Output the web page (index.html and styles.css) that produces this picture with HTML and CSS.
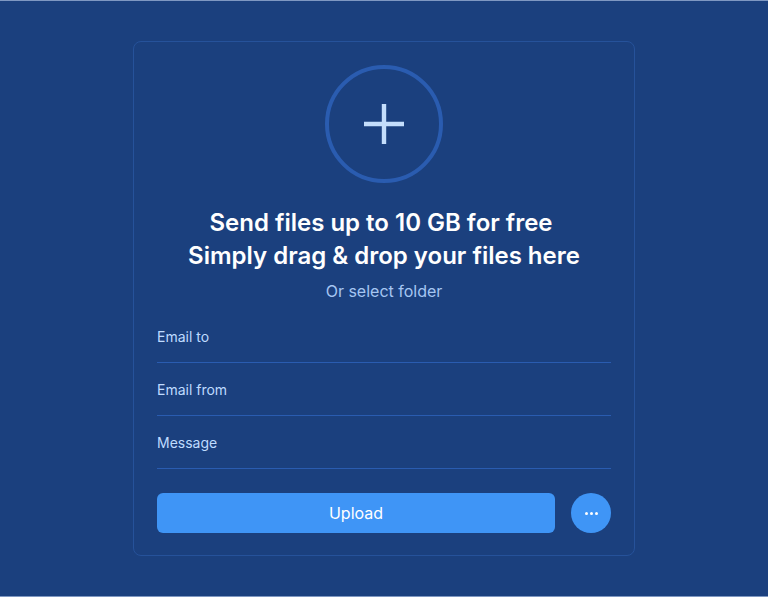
FILE: index.html
```html
<!DOCTYPE html>
<html lang="en">
<head>
<meta charset="utf-8">
<title>Send files</title>
<link rel="stylesheet" href="styles.css">
</head>
<body>
<main class="page">
  <section class="card">
    <div class="drop">
      <svg class="plus" width="40" height="40" viewBox="0 0 40 40" aria-hidden="true">
        <path d="M20 0V40M0 20H40" stroke="#c4defc" stroke-width="4.4" fill="none"/>
      </svg>
    </div>
    <h1 class="title">Send files up to 10 GB for free&nbsp;<br>Simply drag &amp; drop your files here</h1>
    <p class="sub">Or select folder</p>
    <div class="fields">
      <label class="field">Email to</label>
      <label class="field">Email from</label>
      <label class="field">Message</label>
    </div>
    <div class="actions">
      <button class="upload" type="button">Upload</button>
      <button class="more" type="button" aria-label="More options">
        <span class="dot"></span><span class="dot"></span><span class="dot"></span>
      </button>
    </div>
  </section>
</main>
</body>
</html>
```

FILE: styles.css
```css
html, body {
  margin: 0;
  padding: 0;
  height: 100%;
}
body {
  background: #1b407e;
  font-family: Inter, "Noto Sans", "Liberation Sans", sans-serif;
  border-top: 1px solid #7f98c2;
  border-bottom: 1px solid #7f98c2;
  box-sizing: border-box;
}
.page {
  height: 100%;
  display: flex;
  align-items: center;
  justify-content: center;
}
.card {
  width: 502px;
  box-sizing: border-box;
  border: 1px solid #26529a;
  border-radius: 8px;
  padding: 23px 23px 22px;
  display: flex;
  flex-direction: column;
  align-items: center;
}
.drop {
  width: 118px;
  height: 118px;
  box-sizing: border-box;
  border: 4px solid #2a5cb0;
  border-radius: 50%;
  display: flex;
  align-items: center;
  justify-content: center;
}
.title {
  margin: 23px 0 0;
  font-size: 24px;
  line-height: 33px;
  font-weight: 600;
  color: #ffffff;
  text-align: center;
}
.sub {
  margin: 7px 0 0;
  font-size: 16px;
  line-height: 24px;
  color: #a6c6f2;
}
.fields {
  align-self: stretch;
  margin-top: 7px;
  display: flex;
  flex-direction: column;
}
.field {
  padding: 17px 0 15px;
  font-size: 14px;
  line-height: 20px;
  color: #bfdbfe;
  border-bottom: 1px solid #2a5cb0;
}
.actions {
  align-self: stretch;
  margin-top: 24px;
  display: flex;
  gap: 16px;
  align-items: center;
}
.upload {
  flex: 1;
  height: 40px;
  border: none;
  border-radius: 6px;
  background: #3f95f6;
  color: #ffffff;
  font-family: inherit;
  font-size: 16px;
  padding: 0;
}
.more {
  width: 40px;
  height: 40px;
  border: none;
  border-radius: 50%;
  background: #3f95f6;
  display: flex;
  align-items: center;
  justify-content: center;
  gap: 2px;
  padding: 0;
}
.dot {
  width: 3px;
  height: 3px;
  border-radius: 50%;
  background: #ffffff;
}
```
